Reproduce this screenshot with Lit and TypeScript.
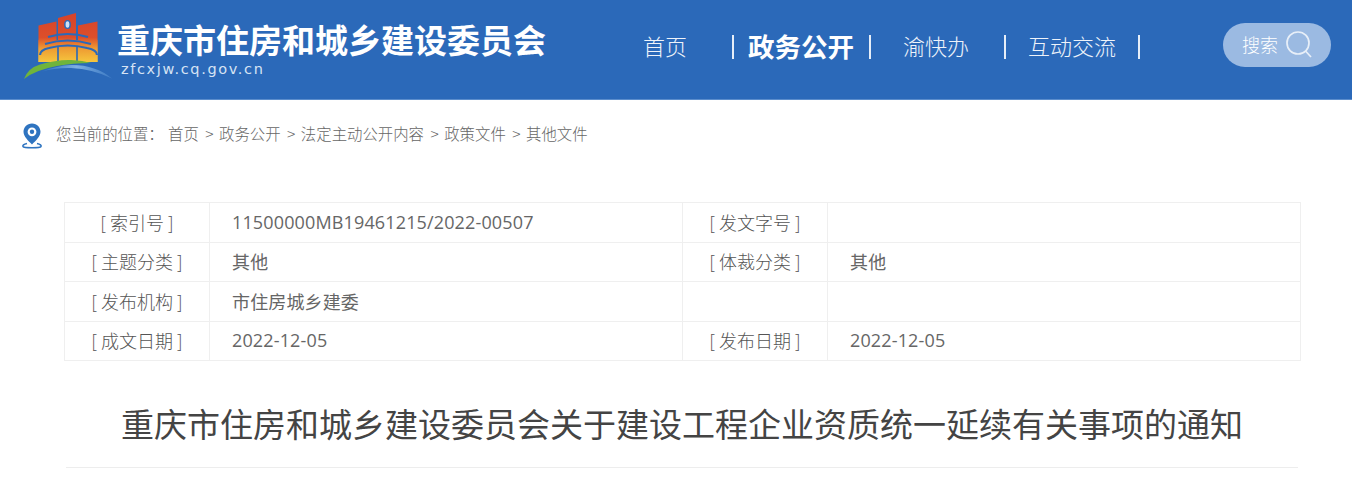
import { LitElement, html, css } from "lit";
import { customElement } from "lit/decorators.js";

const rows = [
  ["[ 索引号 ]", "11500000MB19461215/2022-00507", "[ 发文字号 ]", ""],
  ["[ 主题分类 ]", "其他", "[ 体裁分类 ]", "其他"],
  ["[ 发布机构 ]", "市住房城乡建委", "", ""],
  ["[ 成文日期 ]", "2022-12-05", "[ 发布日期 ]", "2022-12-05"],
];
const crumbs = ["首页", "政务公开", "法定主动公开内容", "政策文件", "其他文件"];

@customElement("app-root")
export class AppRoot extends LitElement {
  static styles = css`
    :host { display: block; width: 1352px; height: 494px; overflow: hidden; background: #fff;
      font-family: "Open Sans", "Noto Sans CJK SC", sans-serif; color: #555; }
    .header { height: 99px; background: #2b69b9; border-bottom: 1px solid #5b8dcc; display: flex; align-items: flex-start; }
    .logo { width: 89px; height: 82px; margin: 10px 0 0 23px; flex: none; }
    .brand { width: 480px; flex: none; margin-left: 5px; padding-top: 16px; color: #fff; }
    .brand-name { font-size: 33px; line-height: 46px; font-weight: 700; font-family: "Noto Sans CJK SC", sans-serif; white-space: nowrap; }
    .brand-url { line-height: 18px; margin: -2px 0 0 4px; color: #d6e3f4; font-family: "DejaVu Sans", sans-serif; font-size: 14.5px; letter-spacing: 1.62px; white-space: nowrap; }
    .nav { display: flex; align-items: center; height: 26px; margin-top: 34px; margin-left: 46px; color: #eef3fa; font-size: 22px; font-family: "Noto Sans CJK SC", sans-serif; font-weight: 300; white-space: nowrap; }
    .nav .t { padding-bottom: 4px; }
    .nav .sep { width: 2px; height: 24px; background: #e6eef8; flex: none; }
    .nav .cur { font-size: 26.5px; font-weight: 700; color: #fff; }
    .search { width: 108px; height: 44px; margin: 23px 0 0 83px; flex: none; border-radius: 22px; background: #9bbae2; display: flex; align-items: center; gap: 7px; padding-left: 19px; box-sizing: border-box; color: #fff; font-size: 18px; font-family: "Noto Sans CJK SC", sans-serif; font-weight: 300; }
    .search span { padding-bottom: 2px; }
    .crumb { display: flex; align-items: center; height: 70px; padding-left: 21px; font-size: 15.4px; color: #666; font-family: "Noto Sans CJK SC", sans-serif; font-weight: 300; white-space: nowrap; }
    .crumb span { padding-bottom: 5px; }
    .pin { width: 22px; height: 27px; margin-right: 13px; flex: none; }
    .crumb-l { width: 112px; flex: none; }
    .crumb .gt { margin: 0 5.5px 0 6.5px; }
    table { border-collapse: collapse; table-layout: fixed; width: 1236px; margin: 32px 0 0 64px; font-size: 18px; letter-spacing: .14px; color: #666; }
    td { border: 1px solid #efefef; height: 39.5px; padding: 0 0 1px; box-sizing: border-box; white-space: nowrap; }
    td.k { width: 145px; text-align: center; font-family: "Noto Sans CJK SC", sans-serif; font-weight: 300; color: #555; letter-spacing: 0; }
    td.v { width: 473px; padding-left: 22px; }
    h1 { margin: 38px 0 0 64px; width: 1236px; text-align: center; font-size: 33px; line-height: 48px; font-weight: 400; color: #444; font-family: "Noto Sans CJK SC", sans-serif; white-space: nowrap; }
    .rule { height: 1px; background: #ededed; margin: 20px 54px 0 66px; }
  `;

  render() {
    return html`
      <div class="header">
        <svg class="logo" viewBox="0 0 89 82">
          <defs>
            <linearGradient id="g" gradientUnits="userSpaceOnUse" x1="0" y1="3" x2="0" y2="52">
              <stop offset="0" stop-color="#d5432a"/><stop offset=".5" stop-color="#dd4f2a"/><stop offset=".72" stop-color="#ee9a32"/><stop offset="1" stop-color="#f5c63e"/>
            </linearGradient>
            <linearGradient id="b" gradientUnits="userSpaceOnUse" x1="18" y1="0" x2="89" y2="0">
              <stop offset="0" stop-color="#3f86cf" stop-opacity=".5"/><stop offset=".5" stop-color="#7fb0e2"/><stop offset="1" stop-color="#5f9ad8" stop-opacity=".4"/>
            </linearGradient>
          </defs>
          <path d="M15.5 15.5 L33.5 11.5 V52 H15.5Z M35 8 L53 3 V52 H35Z M55 15.5 L74.5 11.5 V52 H55Z" fill="url(#g)"/>
          <path d="M15.5 30 H74.5 V52 H15.5Z" fill="url(#g)"/>
          <ellipse cx="44.5" cy="14.5" rx="3.4" ry="4.6" fill="#2b69b9"/>
          <ellipse cx="44.5" cy="14.5" rx="1.9" ry="3.2" fill="#cfe0f4"/>
          <path d="M25 27 Q44.5 21 65 27 M22 34 Q44.5 27 68 34" fill="none" stroke="#2b69b9" stroke-width="2"/>
          <path d="M17 45 Q17 40 26 38 Q44.5 33 64 38 Q74 40 74 45" fill="none" stroke="#2b69b9" stroke-width="2.2"/>
          <path d="M35 36 V52 M54 36 V52" stroke="#2b69b9" stroke-width="1.6"/>
          <path d="M1 69 Q5 58 17 54.5 Q34 49.5 48 50 Q60 50.5 68 53 Q50 53 34 56 Q12 60 1 69Z" fill="#6fb43c"/>
          <path d="M19 61.5 Q34 55.5 48 55 Q72 54.5 89 68.5 Q70 59 48 58 Q32 57.5 19 61.5Z" fill="url(#b)"/>
        </svg>
        <div class="brand">
          <div class="brand-name">重庆市住房和城乡建设委员会</div>
          <div class="brand-url">zfcxjw.cq.gov.cn</div>
        </div>
        <nav class="nav">
          <span class="t">首页</span>
          <span class="sep" style="margin-left:45px"></span>
          <span class="t cur" style="margin-left:14px">政务公开</span>
          <span class="sep" style="margin-left:15px"></span>
          <span class="t" style="margin-left:32px">渝快办</span>
          <span class="sep" style="margin-left:35px"></span>
          <span class="t" style="margin-left:22px">互动交流</span>
          <span class="sep" style="margin-left:22px"></span>
        </nav>
        <div class="search">
          <span>搜索</span>
          <svg width="28" height="30" viewBox="0 0 28 30" fill="none" stroke="#e8eff8" stroke-width="1.7"><circle cx="13" cy="13" r="11"/><path d="M20.5 21 L26 27"/></svg>
        </div>
      </div>
      <div class="crumb">
        <svg class="pin" viewBox="0 0 22 27" fill="none">
          <path d="M11 1.5 C5.8 1.5 2.5 5.4 2.5 9.8 C2.5 14.5 7.5 19 11 22.5 C14.5 19 19.5 14.5 19.5 9.8 C19.5 5.4 16.2 1.5 11 1.5Z" fill="#2f74c0"/>
          <circle cx="11" cy="9.8" r="4.4" fill="#fff"/><circle cx="11" cy="9.8" r="2.2" fill="#2f74c0"/>
          <path d="M6 21.5 C2.5 22.3 1.5 23.5 2 24.5 C3 26.2 19 26.2 20 24.5 C20.5 23.5 19.5 22.3 16 21.5" stroke="#2f74c0" stroke-width="1.6"/>
        </svg>
        <span class="crumb-l">您当前的位置：</span>
        ${crumbs.map((c, i) => html`${i ? html`<span class="gt">&gt;</span>` : ""}<span>${c}</span>`)}
      </div>
      <table>
        ${rows.map((r) => html`<tr><td class="k">${r[0]}</td><td class="v">${r[1]}</td><td class="k">${r[2]}</td><td class="v">${r[3]}</td></tr>`)}
      </table>
      <h1>重庆市住房和城乡建设委员会关于建设工程企业资质统一延续有关事项的通知</h1>
      <div class="rule"></div>
    `;
  }
}
